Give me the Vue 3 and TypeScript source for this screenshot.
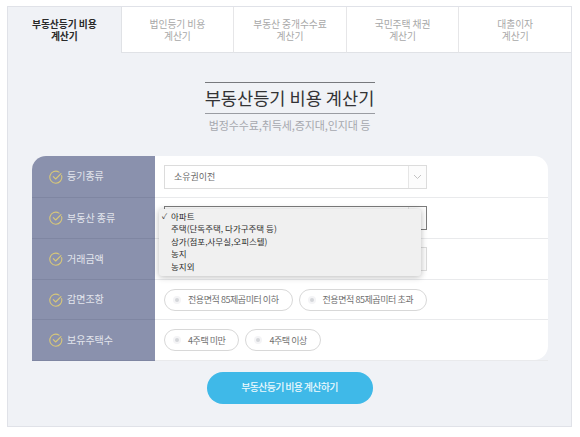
<script setup lang="ts">
const tabs: string[] = [
  '부동산등기 비용\n계산기',
  '법인등기 비용\n계산기',
  '부동산 중개수수료\n계산기',
  '국민주택 채권\n계산기',
  '대출이자\n계산기',
]
const options = ['아파트', '주택(단독주택, 다가구주택 등)', '상가(점포,사무실,오피스텔)', '농지', '농지외']
interface Row { label: string; kind: 'select' | 'radio'; value?: string; focus?: boolean; pills?: string[] }
const rows: Row[] = [
  { label: '등기종류', kind: 'select', value: '소유권이전' },
  { label: '부동산 종류', kind: 'select', value: '', focus: true },
  { label: '거래금액', kind: 'select', value: '' },
  { label: '감면조항', kind: 'radio', pills: ['전용면적 85제곱미터 이하', '전용면적 85제곱미터 초과'] },
  { label: '보유주택수', kind: 'radio', pills: ['4주택 미만', '4주택 이상'] },
]
</script>

<template>
  <div class="page">
    <div class="frame">
      <nav class="tabs">
        <div v-for="(t, i) in tabs" :key="i" class="tab" :class="{ active: i === 0 }">{{ t }}</div>
      </nav>
      <header class="head">
        <h1>부동산등기 비용 계산기</h1>
        <p>법정수수료,취득세,증지대,인지대 등</p>
      </header>
      <section class="card">
        <div v-for="(r, i) in rows" :key="i" class="row">
          <div class="label">
            <svg class="check" width="14" height="14" viewBox="0 0 14 14" fill="none">
              <path d="M12.6 5.6A6 6 0 1 1 10 2.1" stroke="#d9c878" stroke-width="1.1" stroke-linecap="round" />
              <path d="M4.3 6.6 6.7 9 12 3.6" stroke="#d9c878" stroke-width="1.1" stroke-linecap="round" stroke-linejoin="round" />
            </svg>
            <span class="label-text">{{ r.label }}</span>
          </div>
          <div class="field">
            <div v-if="r.kind === 'select'" class="select" :class="{ focus: r.focus }">
              <span class="value">{{ r.value }}</span>
              <span class="arrow">
                <svg width="9" height="6" viewBox="0 0 9 6" fill="none">
                  <path d="M1 1l3.5 3.5L8 1" stroke="#b4b4b4" stroke-width="0.8" />
                </svg>
              </span>
            </div>
            <div v-else class="pills">
              <div v-for="p in r.pills" :key="p" class="pill">
                <i class="dot"></i>
                <span>{{ p }}</span>
              </div>
            </div>
          </div>
        </div>
        <ul class="menu">
          <li v-for="(o, i) in options" :key="o">
            <span class="tick">{{ i === 0 ? '✓' : '' }}</span>{{ o }}
          </li>
        </ul>
      </section>
      <div class="actions">
        <button class="submit" type="button">부동산등기 비용 계산하기</button>
      </div>
    </div>
  </div>
</template>

<style>
html, body { margin: 0; background: #fff; }
</style>

<style scoped>
* { box-sizing: border-box; }
.page {
  width: 580px;
  height: 437px;
  padding: 6px 8px 10px 7px;
  font-family: "Noto Sans CJK KR", "Noto Sans", sans-serif;
}
.frame {
  height: 421px;
  background: #f0f2f6;
  border: 1px solid #e0e2e8;
  display: flex;
  flex-direction: column;
}
.tabs { display: grid; grid-template-columns: repeat(5, 1fr); height: 46px; flex: none; }
.tab {
  display: flex;
  align-items: center;
  justify-content: center;
  text-align: center;
  white-space: pre-line;
  font-size: 9.8px;
  line-height: 12px;
  letter-spacing: -0.1px;
  color: #a8a8a8;
  background: #fff;
  border-left: 1px solid #e6e6e8;
  border-bottom: 1px solid #e0e2e6;
}
.tab.active {
  background: #f0f2f6;
  color: #2a2a2a;
  font-weight: 700;
  border: 0;
  padding-bottom: 1px;
}
.tab.active + .tab { border-left-color: #e0e2e6; }
.head { display: flex; flex-direction: column; align-items: center; padding-top: 29px; flex: none; }
h1 {
  margin: 0;
  width: 170px;
  height: 32px;
  border-top: 1px solid #77797d;
  border-bottom: 1px solid #9a9ca2;
  font-size: 17.6px;
  line-height: 29px;
  font-weight: 400;
  color: #333335;
  text-align: center;
  white-space: nowrap;
}
p {
  margin: 3px 0 1px;
  font-size: 11px;
  line-height: 16px;
  letter-spacing: -0.1px;
  color: #a6a8ae;
}
.card {
  position: relative;
  margin: 22px 0 0 24px;
  width: 516px;
  height: 204px;
  background: #fff;
  border-radius: 14px;
  display: flex;
  flex-direction: column;
  flex: none;
}
.row { display: flex; height: 41px; flex: none; }
.row:first-child { height: 42px; }
.row:nth-child(4), .row:last-child { height: 40px; }
.label {
  width: 123px;
  flex: none;
  display: flex;
  align-items: center;
  padding-left: 17px;
  gap: 4px;
  background: #8a91ad;
  color: #e2e5ec;
  font-size: 10px;
  border-bottom: 1px solid #7f86a2;
}
.label-text { margin-top: -2px; }
.row:first-child .label { border-top-left-radius: 14px; }
.row:last-child .label { border-bottom-left-radius: 14px; border-bottom: 0; }
.check { flex: none; }
.field {
  flex: 1;
  display: flex;
  align-items: center;
  padding-left: 9px;
  border-bottom: 1px solid #e9eaec;
}
.row:last-child .field { border-bottom: 0; }
.select {
  width: 263px;
  height: 24px;
  margin-bottom: 1px;
  display: flex;
  align-items: center;
  justify-content: space-between;
  border: 1px solid #dcdcdc;
  background: #fff;
}
.row:first-child .select { margin-bottom: 0; }
.select.focus { border-color: #7c7c7c; }
.value { padding-left: 9px; font-size: 9px; color: #6a6a6a; }
.arrow {
  width: 18px;
  height: 100%;
  display: flex;
  align-items: center;
  justify-content: center;
  border-left: 1px solid #e6e6e6;
  background: #fcfcfc;
}
.pills { display: flex; gap: 6px; }
.pill {
  height: 22px;
  display: flex;
  align-items: center;
  padding: 0 13px 0 10px;
  gap: 9px;
  border: 1px solid #d8d8d8;
  border-radius: 11px;
  background: #fff;
  font-size: 9px;
  letter-spacing: -0.45px;
  color: #707070;
  white-space: nowrap;
}
.dot {
  width: 4px;
  height: 4px;
  border-radius: 50%;
  background: #d4d6da;
  box-shadow: 0 0 0 2px #f4f4f6;
}
.menu {
  position: absolute;
  left: 127px;
  top: 53px;
  width: 262px;
  height: 67px;
  margin: 0;
  padding: 1px 0 0;
  list-style: none;
  background: #f0f0f0;
  border-radius: 3px;
  box-shadow: 0 1px 6px rgba(0, 0, 0, 0.28);
  font-size: 8.5px;
  line-height: 12.4px;
  color: #2e2e2e;
}
.menu li { display: flex; white-space: nowrap; }
.tick { width: 12px; padding-left: 3px; flex: none; font-size: 7.5px; }
.actions { display: flex; justify-content: center; padding-top: 12px; }
.submit {
  width: 166px;
  height: 32px;
  border: 0;
  border-radius: 16px;
  background: #3fb9e8;
  color: #eef9fd;
  font-family: inherit;
  font-size: 10px;
  font-weight: 500;
  letter-spacing: -0.7px;
  padding: 0 0 3px;
}
</style>
